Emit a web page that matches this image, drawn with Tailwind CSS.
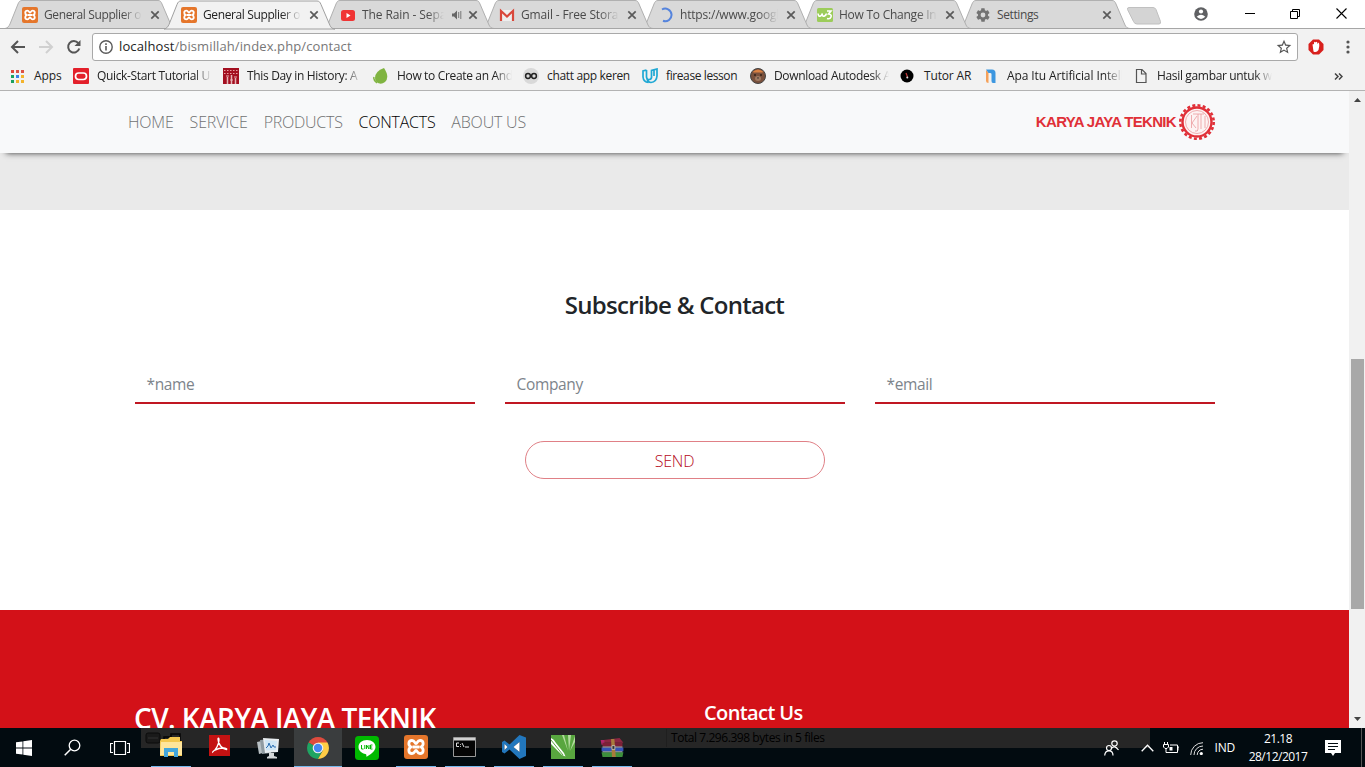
<!DOCTYPE html>
<html lang="en">
<head>
<meta charset="utf-8">
<title>Contact</title>
<script src="https://cdn.jsdelivr.net/npm/@tailwindcss/browser@4"></script>
</head>
<body class="w-[1365px] h-[767px] overflow-hidden bg-white font-['Segoe_UI','Open_Sans',sans-serif] text-[12px] text-[#222]">
<svg class="hidden">
  <symbol id="tab" viewBox="0 0 172 29"><path d="M0 28.5C3 28 4 26 5 24L13 4C14 1.5 15 .5 17 .5H153C155 .5 156 1.500 157 4L166 25C167 27 168 28.300 171 28.500Z"/></symbol>
  <symbol id="xampp" viewBox="0 0 24 24"><rect width="24" height="24" rx="3" fill="#e5762b"/><path d="M8 5.500C4 5.500 4 10.500 7 12C4 13.500 4 18.500 8 18.500C11 18.500 10.500 15.500 12 15.500S13 18.500 16 18.500C20 18.500 20 13.500 17 12C20 10.500 20 5.500 16 5.500C13 5.500 13.500 8.500 12 8.500S11 5.500 8 5.500ZM8.500 12H15.500" fill="none" stroke="#fff" stroke-width="2.800" stroke-linejoin="round"/></symbol>
  <symbol id="x" viewBox="0 0 10 10"><path d="M1.300 1.300L8.700 8.700M8.700 1.300L1.300 8.700" stroke="#5a5a5a" stroke-width="1.700"/></symbol>
</svg>
<div class="flex flex-col h-full">

  <header class="flex h-[29px] shrink-0 bg-white pl-[5px] tracking-[-0.38px]">
    <div class="relative w-[159px] shrink-0">
      <svg class="absolute left-0 top-0 w-[172px] h-[29px] fill-[#d9d9d9] stroke-[#b0b0b0]"><use href="#tab"/></svg>
      <div class="relative flex h-[29px] items-center pl-[17px] pr-[4px]"><svg class="size-4 shrink-0 mr-1.5"><use href="#xampp"/></svg><span class="flex-1 overflow-hidden whitespace-nowrap text-[#4a4a4a] mask-r-from-80%">General Supplier o</span><svg class="size-2.5 shrink-0 ml-2"><use href="#x"/></svg></div>
    </div>
    <div class="relative w-[159px] shrink-0 z-20">
      <svg class="absolute left-0 top-0 w-[172px] h-[30px] fill-[#f2f2f2] stroke-[#a0a0a0]"><use href="#tab"/></svg>
      <div class="relative flex h-[29px] items-center pl-[17px] pr-[4px]"><svg class="size-4 shrink-0 mr-1.5"><use href="#xampp"/></svg><span class="flex-1 overflow-hidden whitespace-nowrap text-[#222] mask-r-from-80%">General Supplier o</span><svg class="size-2.5 shrink-0 ml-2"><use href="#x"/></svg></div>
    </div>
    <div class="relative w-[159px] shrink-0 z-10">
      <svg class="absolute left-0 top-0 w-[172px] h-[29px] fill-[#d9d9d9] stroke-[#b0b0b0]"><use href="#tab"/></svg>
      <div class="relative flex h-[29px] items-center pl-[17px] pr-[4px]"><svg class="size-4 shrink-0 mr-1.5" viewBox="0 0 16 16"><rect x="1" y="3" width="14" height="11" rx="2.500" fill="#f03434"/><path d="M6.500 6L10.500 8.500L6.500 11Z" fill="#fff"/></svg><span class="flex-1 overflow-hidden whitespace-nowrap tracking-[-0.1px] text-[#4a4a4a] mask-r-from-80%">The Rain - Sepa</span><svg class="w-[10px] h-[10px] shrink-0 ml-2" viewBox="0 0 10 10"><path d="M0 3.500H2L5 .5V9.500L2 6.500H0Z" fill="#666"/><path d="M6.700 2V8M8.800 1V9" stroke="#777" /></svg><svg class="size-2.5 shrink-0 ml-[6px]"><use href="#x"/></svg></div>
    </div>
    <div class="relative w-[159px] shrink-0 z-[9]">
      <svg class="absolute left-0 top-0 w-[172px] h-[29px] fill-[#d9d9d9] stroke-[#b0b0b0]"><use href="#tab"/></svg>
      <div class="relative flex h-[29px] items-center pl-[17px] pr-[4px]"><svg class="size-4 shrink-0 mr-1.5" viewBox="0 0 16 16"><path d="M1 3H15V14H1Z" fill="#eee"/><path d="M2 14V4L8 9.500L14 4V14" fill="none" stroke="#d9483b" stroke-width="2.200"/></svg><span class="flex-1 overflow-hidden whitespace-nowrap tracking-[-0.15px] text-[#4a4a4a] mask-r-from-80%">Gmail - Free Storag</span><svg class="size-2.5 shrink-0 ml-2"><use href="#x"/></svg></div>
    </div>
    <div class="relative w-[159px] shrink-0 z-[8]">
      <svg class="absolute left-0 top-0 w-[172px] h-[29px] fill-[#d9d9d9] stroke-[#b0b0b0]"><use href="#tab"/></svg>
      <div class="relative flex h-[29px] items-center pl-[17px] pr-[4px]"><svg class="size-4 shrink-0 mr-1.5" viewBox="0 0 16 16"><path d="M4 2.500A6.300 6.300 0 1 1 5 13.800" fill="none" stroke="#5584dd" stroke-width="2"/></svg><span class="flex-1 overflow-hidden whitespace-nowrap tracking-[-0.2px] text-[#4a4a4a] mask-r-from-80%">https://www.googl</span><svg class="size-2.5 shrink-0 ml-2"><use href="#x"/></svg></div>
    </div>
    <div class="relative w-[159px] shrink-0 z-[7]">
      <svg class="absolute left-0 top-0 w-[172px] h-[29px] fill-[#d9d9d9] stroke-[#b0b0b0]"><use href="#tab"/></svg>
      <div class="relative flex h-[29px] items-center pl-[17px] pr-[4px]"><svg class="size-4 shrink-0 mr-1.5" viewBox="0 0 16 16"><rect y="1" width="16" height="14" rx="1.500" fill="#9ccc5a"/><path d="M1 6.500Q1.500 10 3.500 9T5 6.500Q5.500 10 7.500 9T9 6.500M10 4H14L11.500 7Q15 7.500 14 10T10 11.500" fill="none" stroke="#fff" stroke-width="1.600"/></svg><span class="flex-1 overflow-hidden whitespace-nowrap text-[#4a4a4a] tracking-[-0.25px] mask-r-from-80%">How To Change In</span><svg class="size-2.5 shrink-0 ml-2"><use href="#x"/></svg></div>
    </div>
    <div class="relative w-[159px] shrink-0 z-[6]">
      <svg class="absolute left-0 top-0 w-[172px] h-[29px] fill-[#d9d9d9] stroke-[#b0b0b0]"><use href="#tab"/></svg>
      <div class="relative flex h-[29px] items-center pl-[17px] pr-[6px]"><svg class="size-4 shrink-0 mr-1.5 -ml-px" viewBox="0 0 24 24"><path fill="#737373" d="M19.400 13c.04-.3.060-.6.060-1s-.02-.7-.06-1l2.100-1.700c.2-.1.200-.4.100-.6l-2-3.500c-.1-.2-.4-.3-.6-.2l-2.500 1c-.5-.4-1.100-.7-1.700-1L14.400 2.400c0-.2-.2-.4-.5-.4h-4c-.2 0-.4.200-.5.400L9.100 5c-.6.300-1.200.6-1.700 1l-2.500-1c-.2-.1-.5 0-.6.200l-2 3.500c-.1.200-.1.500.1.600L4.500 11c-.04.3-.07.700-.07 1s.02.700.07 1l-2.100 1.700c-.2.100-.2.400-.1.600l2 3.500c.1.200.4.300.6.200l2.500-1c.5.400 1.100.7 1.700 1l.4 2.600c.1.200.2.400.5.400h4c.3 0 .5-.2.5-.4l.4-2.600c.6-.3 1.200-.6 1.700-1l2.500 1c.2.100.5 0 .6-.2l2-3.500c.1-.2.1-.5-.1-.6ZM12 15.600a3.600 3.600 0 1 1 0-7.200 3.600 3.600 0 0 1 0 7.200Z"/></svg><span class="flex-1 whitespace-nowrap text-[#4a4a4a]">Settings</span><svg class="size-2.5 shrink-0 ml-2"><use href="#x"/></svg></div>
    </div>
    <svg class="w-9 h-[29px] shrink-0 ml-[8px]" viewBox="0 0 36 29"><path d="M3 7.500H27Q29 7.500 30 9.500L34.500 21.500Q35 24 33 24H11Q8.500 24 7.500 21.500L1.500 9.500Q1 7.500 3 7.500Z" fill="#d4d4d4" stroke="#c0c0c0"/></svg>
    <div class="ml-auto flex h-[27px] items-center">
      <svg class="size-[14px]" viewBox="0 0 14 14"><circle cx="7" cy="7" r="6.800" fill="#5f6063"/><circle cx="7" cy="4.500" r="2.100" fill="#fff"/><path d="M2.700 9.800Q7 5.600 11.300 9.800Q7 14 2.700 9.800Z" fill="#fff"/></svg>
      <svg class="ml-[37px] w-[10px] h-[10px]" viewBox="0 0 10 10"><path d="M0 4.500H10" stroke="#000"/></svg>
      <svg class="ml-[35px] w-[10px] h-[10px]" viewBox="0 0 10 10"><path d="M.5 2.500H7.500V9.500H.5ZM2.500 2.500V.5H9.500V7.500H7.500" fill="none" stroke="#000"/></svg>
      <svg class="ml-[36px] mr-[18px] w-[11px] h-[11px]" viewBox="0 0 11 11"><path d="M.5 .5L10.500 10.500M10.500 .5L.5 10.500" stroke="#000" stroke-width="1.100"/></svg>
    </div>
  </header>

  <div class="flex h-[33px] shrink-0 items-center bg-[#f2f2f2] shadow-[0_-1px_0_#a6a6a6] pl-[10px] pt-[3px] z-10">
    <svg class="w-4 h-4" viewBox="0 0 16 16"><path d="M15 8H2.500M8 2L2 8L8 14" fill="none" stroke="#555" stroke-width="2"/></svg>
    <svg class="w-4 h-4 ml-[12px]" viewBox="0 0 16 16"><path d="M1 8H13.500M8 2L14 8L8 14" fill="none" stroke="#d0d0d0" stroke-width="2"/></svg>
    <svg class="w-4 h-4 ml-[12px]" viewBox="0 0 16 16"><path d="M13.300 9.500A5.700 5.700 0 1 1 12.300 4.200" fill="none" stroke="#555" stroke-width="2"/><path d="M14.500 1V7H8.500Z" fill="#555"/></svg>
    <div class="ml-[10px] flex h-7 w-[1206px] items-center rounded-[3px] border border-[#a9a9a9] bg-white pl-[6px] pr-[5px]">
      <svg class="w-[14px] h-[14px]" viewBox="0 0 14 14"><circle cx="7" cy="7" r="6.200" fill="none" stroke="#5a5a5a" stroke-width="1.400"/><path d="M7 6V10.500M7 3.300V4.900" stroke="#5a5a5a" stroke-width="1.600"/></svg>
      <span class="ml-[6px] text-[13px] tracking-[0.11px] text-[#777] whitespace-nowrap"><span class="text-[#222]">localhost</span>/bismillah/index.php/contact</span>
      <svg class="ml-auto w-4 h-4" viewBox="1 1 22 22"><path fill="#555" d="M22 9.240l-7.190-.62L12 2 9.190 8.630 2 9.240l5.460 4.730L5.820 21 12 17.270 18.180 21l-1.630-7.030L22 9.240zM12 15.400l-3.760 2.270 1-4.280-3.320-2.880 4.380-.38L12 6.100l1.710 4.040 4.380.38-3.320 2.880 1 4.280L12 15.400z"/></svg>
    </div>
    <svg class="ml-[10px] size-4" viewBox="0 0 16 16"><path d="M5 .5H11L15.500 5V11L11 15.500H5L.5 11V5Z" fill="#d8201d"/><path d="M5.500 12.500L4.500 5.500Q5.500 4.500 6 5.500V3.500Q7 2 7.600 3.500Q8.700 2 9.300 3.500V5L10.500 3.500Q11.500 4 11.300 7L10.500 11Q8.500 14 5.500 12.500Z" fill="#fff"/></svg>
    <svg class="ml-[22px] w-1 h-4" viewBox="0 0 4 16"><g fill="#555"><circle cx="2" cy="3" r="1.600"/><circle cx="2" cy="8" r="1.600"/><circle cx="2" cy="13" r="1.600"/></g></svg>
  </div>

  <div class="flex h-[29px] shrink-0 items-center border-b border-[#b3b3b3] bg-[#f2f2f2] whitespace-nowrap tracking-[-0.34px] text-[#222]">
    <div class="flex w-[62px] shrink-0 items-center pl-[11px]"><svg class="w-[13px] h-[13px] shrink-0" viewBox="0 0 13 13"><path d="M0 0h3v3H0z" fill="#e0483a"/><path d="M5 0h3v3H5zM10 0h3v3H10z" fill="#dd5144"/><path d="M0 5h3v3H0zM0 10h3v3H0z" fill="#1ba15f"/><path d="M5 5h3v3H5z" fill="#3b82e8"/><path d="M10 5h3v3H10zM5 10h3v3H5zM10 10h3v3H10z" fill="#f3b32b"/></svg><span class="ml-[10px] tracking-[-0.1px]">Apps</span></div>
    <div class="flex w-[150px] shrink-0 items-center pl-[11px]"><svg class="size-4 shrink-0" viewBox="0 0 16 16"><rect width="16" height="16" rx="1" fill="#e3202b"/><rect x="2.500" y="5" width="11" height="6.500" rx="3.200" fill="none" stroke="#fff" stroke-width="1.700"/></svg><span class="ml-2 w-[115px] overflow-hidden mask-r-from-85%">Quick-Start Tutorial U</span></div>
    <div class="flex w-[150px] shrink-0 items-center pl-[11px]"><svg class="size-4 shrink-0" viewBox="0 0 16 16"><path d="M0 0h16v16H0z" fill="#a30f20"/><path d="M1 2.500H15M1 5.500H15" stroke="#e9a0a4" stroke-dasharray="1.500 1.500"/><path d="M4.500 9V16M8.500 7V16M12.500 10V16" stroke="#e6b4b6" stroke-width="1.500"/><path d="M3 8H6M7 12H10M11 9H14" stroke="#e6b4b6"/></svg><span class="ml-2 w-[115px] overflow-hidden mask-r-from-85%">This Day in History: A</span></div>
    <div class="flex w-[150px] shrink-0 items-center pl-[11px]"><svg class="size-4 shrink-0" viewBox="0 0 16 16"><path d="M11 0Q17 9 12 14Q7 18 2.500 13Q0 4 11 0Z" fill="#80b441"/><path d="M1 9Q0 12 4 15" stroke="#80b441" stroke-width="1.500" fill="none"/></svg><span class="ml-2 w-[115px] overflow-hidden mask-r-from-85%">How to Create an And</span></div>
    <div class="flex w-[119px] shrink-0 items-center pl-[11px]"><svg class="size-4 shrink-0" viewBox="0 0 16 16"><circle cx="8" cy="8" r="8" fill="#d9d9d9"/><circle cx="5" cy="8" r="2.400" fill="none" stroke="#222" stroke-width="1.500"/><circle cx="11" cy="8" r="2.400" fill="none" stroke="#222" stroke-width="1.500"/></svg><span class="ml-2">chatt app keren</span></div>
    <div class="flex w-[108px] shrink-0 items-center pl-[11px]"><svg class="size-4 shrink-0" viewBox="0 0 16 16"><path d="M4.500 2L1 3V9Q1.500 14 6.500 14.500M4.500 2V9Q5 12 7.500 11.500T9.500 8V2.500L15 1V8Q14.500 14 9 14.500Q6 14.500 5 11M12 2V8" fill="none" stroke="#1fa8d4" stroke-width="1.700"/></svg><span class="ml-2 tracking-[-0.4px]">firease lesson</span></div>
    <div class="flex w-[150px] shrink-0 items-center pl-[11px]"><svg class="size-4 shrink-0" viewBox="0 0 16 16"><circle cx="8" cy="8" r="7.500" fill="#79503c" stroke="#444"/><path d="M2.500 4Q8-1 13.500 4L12 4.500H4Z" fill="#d98042"/><ellipse cx="8" cy="10.500" rx="3" ry="2.500" fill="#a07a62"/><path d="M7 9.500H9L8 11Z" fill="#222"/><circle cx="5" cy="7" r=".8"/><circle cx="11" cy="7" r=".8"/></svg><span class="ml-2 w-[115px] overflow-hidden mask-r-from-85%">Download Autodesk A</span></div>
    <div class="flex w-[83px] shrink-0 items-center pl-[11px]"><svg class="w-[14px] h-4 shrink-0" viewBox="0 0 14 16"><circle cx="7" cy="8" r="6.500"/><path d="M6 5L7.500 9" stroke="#b33" stroke-width="1.300"/><circle cx="7.300" cy="9.500" r="1" fill="#ddd"/></svg><span class="ml-[10px] tracking-[-0.15px]">Tutor AR</span></div>
    <div class="flex w-[150px] shrink-0 items-center pl-[11px]"><svg class="size-4 shrink-0" viewBox="0 0 16 16"><path d="M3 2V13Q3 15 5.500 15V4.500Z" fill="#f5a15a"/><path d="M3 1.500H9Q12.500 1.500 12.500 5V15H10Q8.500 15 8.500 13V6Q8.500 5 7 5H5.500Z" fill="#3d97e0"/></svg><span class="ml-2 w-[115px] overflow-hidden tracking-[-0.1px] mask-r-from-85%">Apa Itu Artificial Intell</span></div>
    <div class="flex w-[150px] shrink-0 items-center pl-[11px]"><svg class="size-4 shrink-0" viewBox="0 0 16 16"><path d="M3.500 1.500H9L13 5.500V14.500H3.500ZM8.500 1.500V6H13" fill="none" stroke="#555" stroke-width="1.200"/></svg><span class="ml-2 w-[115px] overflow-hidden mask-r-from-85%">Hasil gambar untuk w</span></div>
    <svg class="ml-auto mr-[22px] w-[9px] h-[7px]" viewBox="0 0 9 7"><path d="M1 .5L4 3.500L1 6.500M5 .5L8 3.500L5 6.500" fill="none" stroke="#444" stroke-width="1.500"/></svg>
  </div>

  <div class="flex h-[637px] shrink-0">
    <main class="w-[1349px] h-full overflow-hidden bg-white text-[#212529]">
      <nav class="relative flex h-[62px] items-center bg-[#f8f9fa] pl-[128px] pr-[134px] text-[16px] font-light text-[#707172] shadow-[0_6px_6px_-6px_#333]">
        <div class="flex gap-[16px] whitespace-nowrap"><a class="tracking-[-0.2px]">HOME</a><a class="tracking-[-0.15px]">SERVICE</a><a class="tracking-[-0.25px]">PRODUCTS</a><a class="tracking-[-0.25px] text-black">CONTACTS</a><a class="tracking-[-0.2px]">ABOUT US</a></div>
        <div class="ml-auto flex items-center">
          <span class="font-['Liberation_Sans',sans-serif] text-[15px] font-bold tracking-[-0.68px] text-[#e03038] whitespace-nowrap">KARYA JAYA TEKNIK</span>
          <svg class="ml-[3px] size-9 overflow-visible" viewBox="0 0 36 36"><circle cx="18" cy="18" r="16.700" fill="none" stroke="#e03038" stroke-width="2.600" stroke-dasharray="3 2.246"/><circle cx="18" cy="18" r="14.500" fill="#fdf3f3" stroke="#e03038" stroke-width="2.400"/><circle cx="18" cy="18" r="11.500" fill="none" stroke="#eb9a9d" stroke-width=".8"/><path d="M12.500 11V24M18 12L13 19L17 24M14 10H25M19 10V25Q19 28 16 27M22 10V25M26 12V24" fill="none" stroke="#eb9a9d" stroke-width=".8"/></svg>
        </div>
      </nav>
      <div class="h-[57px] bg-[#eaeaea]"></div>
      <section class="flex h-[400px] flex-col items-center pt-[77px]">
        <h2 class="text-[24px] leading-9 font-semibold tracking-[-0.72px]">Subscribe &amp; Contact</h2>
        <div class="mt-[43px] flex w-[1080px] gap-[30px] text-[15.5px] tracking-[-0.35px] text-[#7d848b]">
          <div class="flex h-[38px] flex-1 items-center border-b-2 border-[#c01722] pl-[12px] pt-px">*name</div>
          <div class="flex h-[38px] flex-1 items-center border-b-2 border-[#c01722] pl-[12px] pt-px">Company</div>
          <div class="flex h-[38px] flex-1 items-center border-b-2 border-[#c01722] pl-[12px] pt-px">*email</div>
        </div>
        <button class="mt-[37px] h-[38px] w-[300px] rounded-full border border-[#e08086] pt-px text-[16px] tracking-[-0.2px] font-light text-[#b5081a]">SEND</button>
      </section>
      <footer class="flex h-[118px] items-start bg-[#d31118] pl-[134px] text-white whitespace-nowrap">
        <h3 class="w-[570px] pt-[91px] text-[28px] leading-[34px] font-semibold tracking-[-0.57px]">CV. KARYA JAYA TEKNIK</h3>
        <h4 class="pt-[91px] text-[20px] leading-6 font-semibold tracking-[-0.6px]">Contact Us</h4>
      </footer>
    </main>
    <div class="flex w-4 flex-col items-center bg-[#f1f1f1]">
      <svg class="mt-[7px] w-[7px] h-[4px]" viewBox="0 0 7 4"><path d="M0 4L3.500 0L7 4Z" fill="#444"/></svg>
      <div class="mt-[257px] h-[250px] w-[13px] bg-[#a8a8a8]"></div>
      <svg class="mt-auto mb-[7px] w-[7px] h-[4px]" viewBox="0 0 7 4"><path d="M0 0L3.500 4L7 0Z" fill="#444"/></svg>
    </div>
  </div>

  <footer class="relative flex h-[39px] shrink-0 items-stretch bg-[#020b10] text-white">
    <div class="absolute left-[141px] top-0 flex h-5 w-[1009px] items-center bg-[#262626] text-black"><svg class="ml-1 h-3 w-10" viewBox="0 0 40 12"><rect x="1" y="1" width="14" height="10" rx="2" fill="#1a1a1a" stroke="#0b0b0b"/><path d="M3 6H13" stroke="#333"/><path d="M19 5H25V10H19ZM26 2H35V7H26ZM33 9H36" fill="none" stroke="#050505" stroke-width="1.500"/></svg><span class="ml-[481px] border-l border-[#1f1f1f] pl-1 text-[12px] tracking-[-0.44px] whitespace-nowrap">Total 7.296.398 bytes in 5 files</span></div>
    <div class="relative flex">
      <div class="flex w-12 items-center justify-center"><svg class="size-4" viewBox="0 0 16 16"><path d="M0 2.300L6.500 1.400V7.600H0ZM7.300 1.300L16 0V7.600H7.300ZM0 8.400H6.500V14.600L0 13.700ZM7.300 8.400H16V16L7.300 14.700Z" fill="#fff"/></svg></div>
      <div class="flex w-12 items-center justify-center"><svg class="size-[17px]" viewBox="0 0 17 17"><circle cx="10.500" cy="6.500" r="5.300" fill="none" stroke="#fff" stroke-width="1.300"/><path d="M6.700 10.300L.7 16.300" stroke="#fff" stroke-width="1.500"/></svg></div>
      <div class="flex w-12 items-center justify-center"><svg class="w-5 h-4" viewBox="0 0 20 16"><path d="M4.500 1.500H15.500V14.500H4.500ZM3 3.500H.5V12.500H3M17 3.500H19.500V12.500H17" fill="none" stroke="#fff" stroke-width="1.200"/></svg></div>
      <div class="ml-[2px] flex w-[49px] items-center justify-center"><div class="flex h-full w-10 items-center justify-center border-b border-[#76b9ed]"><svg class="w-[22px] h-[20px]" viewBox="0 0 22 20"><path d="M1 2H8L10 0H20V4H22V19H0V4Z" fill="#f4c84f"/><path d="M1 5H22V18H0Z" fill="#ffe59b"/><path d="M4 20V11H18V20H14V15H8V20Z" fill="#44a6dc"/></svg></div></div>
      <div class="flex w-[49px] items-center justify-center"><svg class="size-[21px] mb-1" viewBox="0 0 21 21"><path d="M0 0h21v21H0z" fill="#c41212"/><path d="M3.500 17C7 15 10 9 10 5Q9.800 2 9 4C9 9 13 14 17.500 14.500C19 13 12 12 6 15Q3 17 4 17.500" fill="none" stroke="#fff" stroke-width="1.400"/></svg></div>
      <div class="flex w-[49px] items-center justify-center"><svg class="w-[23px] h-[22px]" viewBox="0 0 23 22"><path d="M0 5L9 3V15L2 17Z" fill="#b8c0c4"/><path d="M3 3L14 2V16L5 17Z" fill="#8f9ba1"/><path d="M6 1L22 2L21 15L8 16Z" fill="#e8edf0"/><path d="M8 3L20 4L19 13L9 13.500Z" fill="#cfe6f5"/><path d="M9 11L11 9L12 6L14 11L16 8L17 10H19" fill="none" stroke="#2c6fb3"/><path d="M12 16H17V19L20 20V21.500H10V20L12 19Z" fill="#d4d8da"/></svg></div>
      <div class="ml-px flex w-[48px] items-center justify-center border-b border-[#76b9ed] bg-[#3a3d3e]"><svg class="size-[22px] mt-px" viewBox="0 0 22 22"><path d="M11 11L1.500 5.500A11 11 0 0 1 20.500 5.500Z" fill="#dd4b3e"/><path d="M11 11L1.500 5.500A11 11 0 0 0 11 22L15.500 13.500Z" fill="#1fa463"/><path d="M11 5.500H20.500A11 11 0 0 1 11 22L15.700 13.700Z" fill="#ffcd46"/><circle cx="11" cy="11" r="5.300" fill="#f2f2f2"/><circle cx="11" cy="11" r="4.200" fill="#4587f3"/></svg></div>
      <div class="flex w-[49px] items-center justify-center"><svg class="size-6" viewBox="0 0 24 24"><rect width="24" height="24" rx="3.500" fill="#00b900"/><path d="M12 4C7 4 3.500 7 3.500 11S7 17.500 10.500 18C12 18.300 11 20 11.500 20.700C15 19 20.500 15 20.500 11S17 4 12 4Z" fill="#fff"/><path d="M6.500 9V13H8.500M9.800 9V13M11.500 13V9L14 13V9M17.500 9H15.500V13H17.500M15.500 11H17.200" fill="none" stroke="#00b900" stroke-width="1"/></svg></div>
      <div class="flex w-[49px] items-center justify-center"><div class="flex h-full w-10 items-center justify-center border-b border-[#76b9ed]"><svg class="size-6"><use href="#xampp"/></svg></div></div>
      <div class="flex w-[49px] items-center justify-center"><div class="flex h-full w-10 items-center justify-center border-b border-[#76b9ed]"><svg class="w-[23px] h-[20px]" viewBox="0 0 23 20"><path d="M.5 .5H22.500V19.500H.5Z" fill="#050505" stroke="#999"/><path d="M1 1H22V3.500H1Z" fill="#d0d0d0"/><path d="M6 6H3.500V9.500H6M7.500 7V7.800M7.500 9V9.800M9 6L11 10M12 10H16" fill="none" stroke="#ddd"/></svg></div></div>
      <div class="flex w-[49px] items-center justify-center"><div class="flex h-full w-10 items-center justify-center border-b border-[#76b9ed]"><svg class="size-6" viewBox="0 0 24 24"><path fill-rule="evenodd" d="M17.500 0L24 2.500V21L17.500 24L7.500 14.500L2.500 18.500L0 17V7L2.500 5.500L7.500 9.500ZM17.500 7L11.500 12L17.500 17ZM2.500 9V15L5.500 12Z" fill="#2277bd"/><path d="M17.500 7L11.500 12L17.500 17ZM2.500 9V15L5.500 12Z" fill="#fff"/></svg></div></div>
      <div class="flex w-[49px] items-center justify-center"><div class="flex h-full w-10 items-center justify-center border-b border-[#76b9ed]"><svg class="size-6" viewBox="0 0 24 24"><path d="M0 0h24v24H0z" fill="#58a63f"/><path d="M13 0L17 16L11 0ZM17 0L18 16L20 0ZM24 1L19 16L24 7Z" fill="#b4dca0"/><path d="M0 3Q3 4 5 8L13 18L14.500 21.500L11 20L0 9Z" fill="#fff"/><path d="M0 5L12 20" stroke="#58a63f"/></svg></div></div>
      <div class="flex w-[49px] items-center justify-center"><div class="flex h-full w-10 items-center justify-center border-b border-[#76b9ed]"><svg class="w-6 h-[19px]" viewBox="0 0 24 20"><path d="M3 2L20 0L24 5H3Z" fill="#8c2742"/><path d="M0 2H4V7H1Z" fill="#b0266a"/><path d="M2 5H23V9H2Z" fill="#7d2038"/><path d="M1 10H24V14H1Z" fill="#3453b8"/><path d="M1 15H24L23 20H2Z" fill="#3d8f3c"/><path d="M2 9.500H23M2 14.500H23" stroke="#e0e0e0" stroke-width=".8"/><path d="M11 1H14.500L16 20H12Z" fill="#a87b3c"/><path d="M12 8H15V12H12Z" fill="#333" stroke="#ddd" stroke-width=".7"/></svg></div></div>
    </div>
    <div class="relative ml-auto flex items-center">
      <svg class="w-[15px] h-[16px]" viewBox="0 0 15 16"><g fill="none" stroke="#fff" stroke-width="1.200"><circle cx="10.500" cy="3.500" r="2.700"/><path d="M7.500 8.500Q10.500 4.500 14.500 10"/><circle cx="5" cy="8" r="2.500"/><path d="M.7 15.500Q1 10.800 5 10.800T9 15.500"/></g></svg>
      <svg class="ml-[22px] w-[13px] h-[8px]" viewBox="0 0 13 8"><path d="M.7 7.200L6.500 1.200L12.300 7.200" fill="none" stroke="#fff" stroke-width="1.300"/></svg>
      <svg class="ml-[9px] w-4 h-[12px]" viewBox="0 0 16 12"><path d="M1.500 0V2.500M4.500 0V2.500M.5 2.500H5.500V5L4 6.500H2L.5 5ZM3 6.500V10.500H14.500V3H7M14.500 5H16V8.500" fill="none" stroke="#fff"/><path d="M6.500 5H9.500V8.500H6.500Z" fill="#fff"/></svg>
      <svg class="ml-[11px] w-[13px] h-[13px] mt-0.5" viewBox="0 0 13 13"><g fill="none" stroke="#ddd" stroke-width="1"><path d="M.7 13A12.300 12.300 0 0 1 13 .7"/><path d="M4 13A9 9 0 0 1 13 4"/><path d="M7.200 13A5.800 5.800 0 0 1 13 7.200"/></g><circle cx="11.300" cy="11.500" r="1.600" fill="#fff"/></svg>
      <span class="ml-[12px] tracking-[-0.2px]">IND</span>
      <div class="ml-[13px] flex w-[60px] flex-col items-center leading-[18px] tracking-[-0.5px] whitespace-nowrap"><span>21.18</span><span>28/12/2017</span></div>
      <svg class="ml-[17px] w-4 h-4" viewBox="0 0 16 16"><path d="M0 0H16V13H10L8 16L6 13H0Z" fill="#fff"/><path d="M3 3.500H13M3 6.500H13M3 9.500H10" stroke="#020b10"/></svg>
      <div class="ml-[20px] mr-[3px] h-[39px] w-px bg-[#555]"></div>
    </div>
  </footer>
</div>
</body>
</html>
